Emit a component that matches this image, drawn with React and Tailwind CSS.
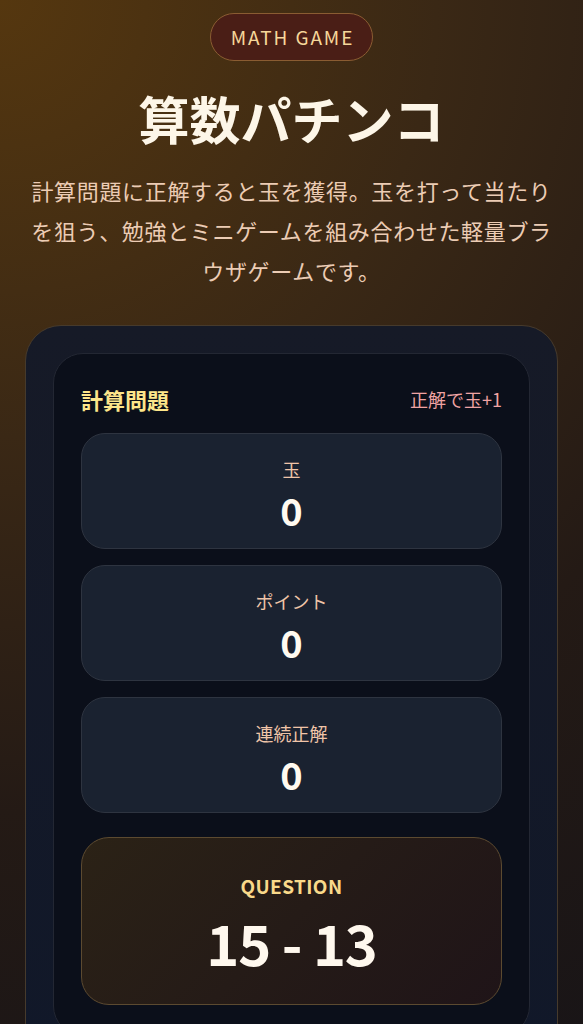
export default function App() {
  const stats = [
    { label: "玉", value: 0 },
    { label: "ポイント", value: 0 },
    { label: "連続正解", value: 0 },
  ];
  return (
    <div className="min-h-screen bg-[radial-gradient(circle_at_0%_0%,#55370f_0%,#3a2815_35%,#241a15_65%,#171417_100%)] font-['Noto_Sans_CJK_JP','Noto_Sans',sans-serif] px-[25px] pb-10">
      <header className="flex flex-col items-center pt-[13px] text-center">
        <span className="inline-flex h-[48px] items-center rounded-full border border-[#8a5c32] bg-[#4a1e16] pl-[20px] pr-[18px] text-[19px] tracking-[0.1em] text-[#f6d79a]">
          MATH GAME
        </span>
        <h1 className="mt-[27px] text-[51px] font-bold leading-[60px] text-[#fdf6e8]">
          算数パチンコ
        </h1>
        <p className="mt-[22px] px-[6px] text-[22px] leading-[40px] tracking-[0.03em] text-[#ecccb4]">
          計算問題に正解すると玉を獲得。玉を打って当たりを狙う、勉強とミニゲームを組み合わせた軽量ブラウザゲームです。
        </p>
      </header>

      <section className="mt-[35px] rounded-[36px] border border-[#463a2c] bg-[linear-gradient(180deg,#161a27_0%,#111829_100%)] p-[27px]">
        <div className="rounded-[30px] border border-[#232733] bg-[#0b0f1a] px-[27px] pt-[30px] pb-[30px]">
          <div className="flex h-[30px] items-center justify-between">
            <h2 className="text-[22px] font-bold text-[#fde68a]">計算問題</h2>
            <span className="text-[18px] text-[#f0a3a3]">正解で玉+1</span>
          </div>

          <div className="mt-[19px] flex flex-col gap-[16px]">
            {stats.map((s) => (
              <div
                key={s.label}
                className="flex h-[116px] flex-col items-center rounded-[24px] border border-[#2e3440] bg-[#1a2230] pt-[22px]"
              >
                <div className="text-[18px] leading-[26px] text-[#f0c5a8]">{s.label}</div>
                <div className="mt-[6px] text-[38px] font-bold leading-[44px] text-[#fffaf0]">
                  {s.value}
                </div>
              </div>
            ))}
          </div>

          <div className="mt-[24px] flex h-[168px] flex-col items-center rounded-[28px] border border-[#5c4a30] bg-[linear-gradient(135deg,#2b2216_0%,#1f1418_100%)] pt-[35px]">
            <div className="text-[19px] font-bold leading-[26px] tracking-[0.02em] text-[#f9d98a]">
              QUESTION
            </div>
            <div className="mt-[8px] text-[56px] font-bold leading-[70px] tracking-[-0.02em] text-[#fff8ee]">
              15 - 13
            </div>
          </div>
        </div>
      </section>
    </div>
  );
}
